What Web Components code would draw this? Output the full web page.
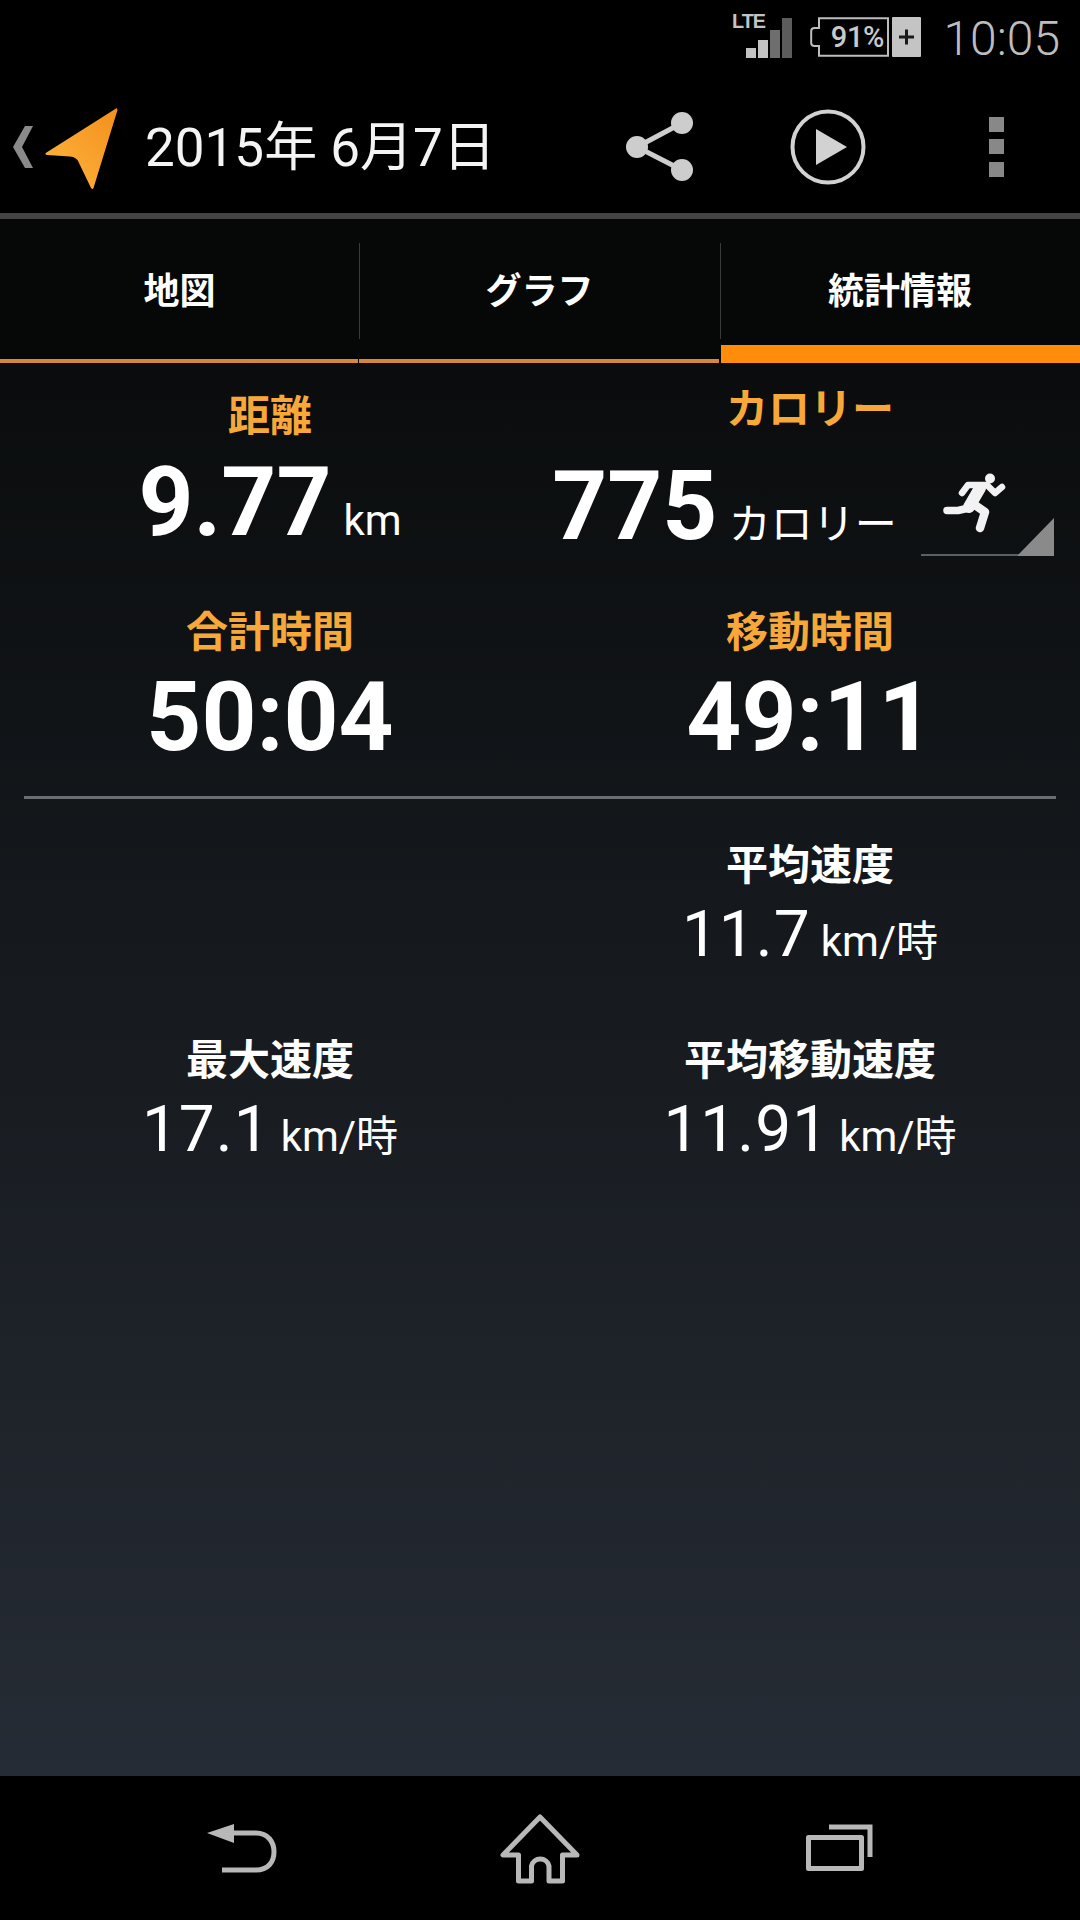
<!DOCTYPE html>
<html lang="ja"><head><meta charset="utf-8"><style>
html,body{margin:0;padding:0;background:#000}
body{width:1080px;height:1920px;font-family:Roboto,"Noto Sans CJK JP",sans-serif;color:#fff;overflow:hidden}
</style></head><body>
<app-screen>
  <status-bar></status-bar>
  <action-bar title-text="2015年 6月7日"></action-bar>
  <tab-bar>
    <tab-item>地図</tab-item>
    <tab-item>グラフ</tab-item>
    <tab-item selected>統計情報</tab-item>
  </tab-bar>
  <stats-panel>
    <stat-cell size="big" accent label="距離" value="9.77" unit="km" style="height:240px;padding-top:24px;--vgap:3px"></stat-cell>
    <stat-cell size="big" accent label="カロリー" value="775" unit="カロリー" style="height:240px;padding-top:17px" activity></stat-cell>
    <stat-cell size="big" accent label="合計時間" value="50:04" style="height:193px;--vgap:2px"></stat-cell>
    <stat-cell size="big" accent label="移動時間" value="49:11" style="height:193px;--vgap:2px"></stat-cell>
    <section-rule></section-rule>
    <stat-cell></stat-cell>
    <stat-cell label="平均速度" value="11.7" unit="km/時" style="height:195px"></stat-cell>
    <stat-cell label="最大速度" value="17.1" unit="km/時" style="height:195px"></stat-cell>
    <stat-cell label="平均移動速度" value="11.91" unit="km/時" style="height:195px"></stat-cell>
  </stats-panel>
  <nav-bar></nav-bar>
</app-screen>
<script>
const CJK='Roboto,"Noto Sans CJK JP",sans-serif';
function def(name,html){
  customElements.define(name,class extends HTMLElement{
    connectedCallback(){
      if(this.shadowRoot)return;
      const r=this.attachShadow({mode:'open'});
      r.innerHTML=typeof html==='function'?html(this):html;
    }
  });
}
def('app-screen',`<style>:host{display:flex;flex-direction:column;width:1080px;height:1920px;background:#000}</style><slot></slot>`);

def('status-bar',`<style>
:host{display:flex;justify-content:flex-end;align-items:flex-start;height:75px;background:#000;box-sizing:border-box;padding-right:20px}
.net{position:relative;width:62px;height:75px;margin-right:14px}
.lte{position:absolute;left:-2px;top:9px;font:700 21px/24px "Liberation Sans",sans-serif;color:#c4c4c4;letter-spacing:-1px;transform:scaleX(.94);transform-origin:0 0}
svg{position:absolute;left:0;top:0}
.batt{position:relative;width:112px;height:40px;margin-top:17px;margin-right:21px}
.batt svg{left:0;top:0}
.pct{position:absolute;left:16px;width:62px;top:0;text-align:center;font:500 29px/41px Roboto,sans-serif;color:#c9c9c9;letter-spacing:-.3px}
.time{font:300 48px/75px Roboto,sans-serif;color:#bdbdbd;margin-top:1px}
</style>
<div class="net"><span class="lte">LTE</span><svg width="62" height="75"><rect x="12" y="48" width="10" height="10" fill="#c2c2c2"/><rect x="24" y="40" width="10" height="18" fill="#c2c2c2"/><rect x="36" y="30" width="10" height="28" fill="#6e6e6e"/><rect x="48" y="18" width="10" height="40" fill="#5c5c5c"/></svg></div>
<div class="batt"><svg width="112" height="40"><path d="M9 1.200H78V38.800H9V29H4.500Q1.200 29 1.200 26V14Q1.200 11 4.500 11H9Z" fill="none" stroke="#bdbdbd" stroke-width="2"/><rect x="82" y="0" width="29" height="40" rx="1" fill="#c4c4c4"/><path d="M89 20H104M96.500 12.500V27.500" stroke="#1a1a1a" stroke-width="3" fill="none"/></svg><span class="pct">91%</span></div>
<div class="time">10:05</div>`);

def('action-bar',h=>`<style>
:host{display:flex;align-items:center;height:138px;background:#000;border-bottom:6px solid #444;box-sizing:content-box;position:relative}
.logo{flex:none;display:block;width:146px;height:138px}
.title{flex:none;width:476px;font:400 53px/138px ${CJK};color:#f4f4f4;white-space:nowrap;margin-top:8px;margin-left:-1px;margin-right:1px}
.ic{flex:none;display:block}
</style>
<svg class="logo" viewBox="0 75 146 138"><defs><linearGradient id="g" x1="0" y1="1" x2="1" y2="0"><stop offset="0" stop-color="#fdb73f"/><stop offset="1" stop-color="#f48f1c"/></linearGradient></defs>
<path d="M33 126H25L13 147 25 168H33L22 147Z" fill="#8a8a8a"/>
<path d="M117 108.500Q116.800 108 116 108.500L46.500 152.500Q44 154 47 155L70 156.500Q77 157 79 163L91 188Q92.500 190 93.500 188L117.500 110Z" fill="url(#g)"/></svg>
<div class="title">${h.getAttribute('title-text')}</div>
<svg class="ic" width="458" height="138" viewBox="622 75 458 138">
<path d="M682 123L637 147L682 170" fill="none" stroke="#cdcdcd" stroke-width="5"/>
<circle cx="682" cy="123" r="11" fill="#cdcdcd"/><circle cx="637" cy="147" r="11" fill="#cdcdcd"/><circle cx="682" cy="170" r="11" fill="#cdcdcd"/>
<circle cx="828" cy="147" r="35.500" fill="none" stroke="#d2d2d2" stroke-width="4"/>
<path d="M816 129L847 147L816 165Z" fill="#d2d2d2"/>
<path d="M989 117h15v15h-15zM989 139h15v15h-15zM989 162h15v15h-15z" fill="#888"/></svg>`);

def('tab-bar',`<style>:host{display:grid;grid-template-columns:359px 361px 360px;height:144px;background:#060808}</style><slot></slot>`);

def('tab-item',h=>{const s=h.hasAttribute('selected');return `<style>
:host{display:block;position:relative;box-sizing:border-box;height:144px}
.t{height:144px;text-align:center;font:700 36px/146px ${CJK};color:#fff}
.u{position:absolute;left:0;right:0;bottom:0;background:${s?'#ff8c0a':'#d9853a'};height:${s?18:4}px;${s?'left:1px;':'right:1px;'}}
.d{position:absolute;left:0;top:24px;height:96px;width:1px;background:#3a3a3a}
.f{display:${h.previousElementSibling?'block':'none'}}
</style><div class="t"><slot></slot></div><div class="d f"></div><div class="u"></div>`});

def('stats-panel',`<style>:host{display:grid;grid-template-columns:540px 540px;grid-auto-rows:min-content;align-content:start;flex:1;background:linear-gradient(#0a0c0d,#262c35)}</style><slot></slot>`);

def('section-rule',`<style>:host{display:block;grid-column:1/3;height:3px;margin:0 24px 37px;background:#6a6e70}</style>`);

def('stat-cell',h=>{
 const big=h.getAttribute('size')==='big',acc=h.hasAttribute('accent'),act=h.hasAttribute('activity');
 const l=h.getAttribute('label')||'',v=h.getAttribute('value')||'',u=h.getAttribute('unit')||'';
 return `<style>
:host{display:block;box-sizing:border-box;text-align:center;height:${l?'auto':'0'}}
.l{font:700 42px/60px ${CJK};color:${acc?'#f6a838':'#fff'}}
.r{display:flex;justify-content:center;align-items:baseline;white-space:nowrap;position:relative;padding-top:var(--vgap,0)}
.v{font:${big?'700 96px/104px':'400 64px/78px'} Roboto,sans-serif;letter-spacing:${big?'0':'1px'}}
.u{font:400 42px/50px ${CJK};margin-left:${big?(act?'11.5px':'12px'):'10px'}}
.a{display:${act?'block':'none'};flex:none;width:134px;height:89px;margin-left:24px;align-self:flex-end}
.r.x{margin-left:-13px;padding-top:14px}
</style>
${l?`<div class="l">${l}</div>`:''}
${v?`<div class="r${act?' x':''}"><span class="v">${v}</span>${u?`<span class="u">${u}</span>`:''}
<svg class="a" viewBox="921 469 134 89"><path d="M921 555H1054" stroke="#5c5f60" stroke-width="2"/><path d="M1018 555L1054 518V556H1018Z" fill="#8a8a8a"/>
<circle cx="990" cy="478.500" r="5" fill="#f2f2f2"/>
<path d="M962 493L968 485H987L995 493L1002 487" fill="none" stroke="#f2f2f2" stroke-width="6.500" stroke-linecap="round" stroke-linejoin="round"/>
<path d="M980 488L969 507" fill="none" stroke="#f2f2f2" stroke-width="12" stroke-linecap="round"/>
<path d="M969 508L958 510.500H947" fill="none" stroke="#f2f2f2" stroke-width="7.500" stroke-linecap="round" stroke-linejoin="round"/>
<path d="M972 503L985 512L980 528" fill="none" stroke="#f2f2f2" stroke-width="8.500" stroke-linecap="round" stroke-linejoin="round"/></svg></div>`:''}`});

def('nav-bar',`<style>:host{display:block;height:144px;background:#000}svg{display:block}</style>
<svg width="1080" height="144" viewBox="0 1776 1080 144" fill="none" stroke="#b8b8b8" stroke-width="5">
<path d="M207 1833L234 1824V1843Z" fill="#b8b8b8" stroke="none"/>
<path d="M232 1833H256C268 1833 274 1842 274 1852C274 1862 268 1870 256 1870H222"/>
<path d="M540 1817L503 1855H518.500V1881H531.500V1866A9 9 0 0 1 549 1866V1881H562.500V1855H577Z" stroke-linejoin="round" stroke-width="5"/>
<path d="M829 1827H870V1857"/><rect x="808.500" y="1837.500" width="53" height="31" stroke-width="5" stroke-linejoin="round"/>
</svg>`);
</script>
</body></html>
